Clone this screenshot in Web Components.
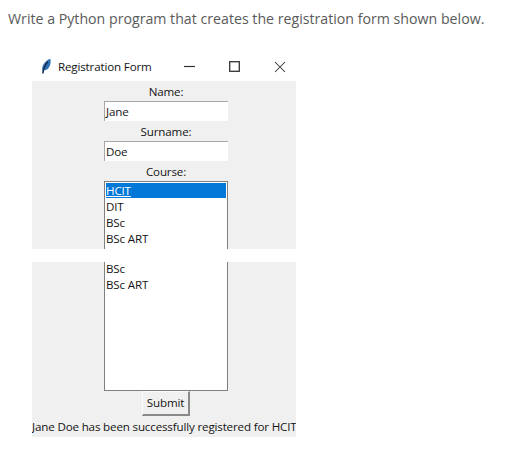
<!DOCTYPE html>
<html><head><meta charset="utf-8"><style>
html,body{margin:0;padding:0;background:#fff}
body{width:508px;height:453px;overflow:hidden;font-family:"Open Sans",sans-serif}
</style></head><body>
<reg-page>
  <span slot="prompt">Write a Python program that creates the registration form shown below.</span>
  <tk-window title="Registration Form">
    <tk-panel style="height:168px;padding-top:2px">
      <tk-label>Name:</tk-label>
      <tk-entry>Jane</tk-entry>
      <tk-label style="margin-top:2px">Surname:</tk-label>
      <tk-entry>Doe</tk-entry>
      <tk-label style="margin-top:2px">Course:</tk-label>
      <tk-list part-type="top" style="margin-top:1px">
        <tk-item selected>HCIT</tk-item><tk-item>DIT</tk-item><tk-item>BSc</tk-item><tk-item>BSc ART</tk-item>
      </tk-list>
    </tk-panel>
    <tk-gap></tk-gap>
    <tk-panel style="height:175px">
      <tk-list part-type="bottom" style="margin-top:-1px">
        <tk-item>BSc</tk-item><tk-item>BSc ART</tk-item>
      </tk-list>
      <tk-button>Submit</tk-button>
      <tk-label style="margin:2px 0 0 -4px;align-self:flex-start;white-space:nowrap">Jane Doe has been successfully registered for HCIT</tk-label>
    </tk-panel>
  </tk-window>
</reg-page>
<script>
const F="font:500 11.6px/17px 'Open Sans',sans-serif;letter-spacing:-.16px;color:#141414;";
function def(name, css, html, init){
  customElements.define(name, class extends HTMLElement{
    connectedCallback(){
      if(this.shadowRoot) return;
      const r=this.attachShadow({mode:"open"});
      r.innerHTML="<style>"+css+"</style>"+html;
      if(init) init(this,r);
    }
  });
}
def("reg-page",
  ":host{display:block}.p{padding:9px 0 0 8px;height:52px;box-sizing:border-box;font:14.18px/20px 'Open Sans',sans-serif;color:#5a5a5a;white-space:nowrap}.w{padding-left:32px}",
  "<div class='p'><slot name='prompt'></slot></div><div class='w'><slot></slot></div>");
def("tk-window",
  ":host{display:block;width:264px}.t{height:29px;display:flex;align-items:center;gap:21px;padding:0 4px 0 8px;"+F+"}.t svg{display:block;flex:none}.i{display:flex;flex:1;align-items:center;gap:5px;min-width:0}.n{white-space:nowrap;position:relative;top:-.5px}.b{display:flex;align-items:center;justify-content:center;width:24px;flex:none}.b svg{position:relative;left:-.5px}",
  `<div class='t'>
    <span class='i'><svg width='13' height='17' viewBox='0 0 13 17'><path d='M2.6 15.8L2.2 10.4C2.6 6.4 5.6 2.4 10.4 .8 11.2 4.8 10 9.6 7 11.6L4 12.6 3.4 15.8Z' fill='#2f6db5'/><path d='M2.9 15.2C3.2 11.4 4.8 7.2 7.8 3.8' stroke='#101c2c' stroke-width='1.1' fill='none'/></svg><span class='n'></span></span>
    <span class='b'><svg width='11' height='11' viewBox='0 0 11 11'><path d='M0 5.5H11' stroke='#333' stroke-width='1.2'/></svg></span>
    <span class='b'><svg width='11' height='11' viewBox='0 0 11 11'><rect x='.7' y='.7' width='9.6' height='9.6' fill='none' stroke='#333' stroke-width='1.3'/></svg></span>
    <span class='b'><svg width='12' height='12' viewBox='0 0 12 12'><path d='M1 1L11 11M11 1L1 11' stroke='#333' stroke-width='1.05'/></svg></span>
  </div><slot></slot>`,
  (h,r)=>{r.querySelector(".n").textContent=h.getAttribute("title")});
def("tk-panel",":host{display:flex;flex-direction:column;align-items:center;box-sizing:border-box;background:#f0f0f0;overflow:hidden;padding-left:4px}","<slot></slot>");
def("tk-gap",":host{display:block;height:13px;background:#fff}","");
def("tk-label",":host{display:block;"+F+"text-align:center}","<slot></slot>");
def("tk-entry",":host{display:block;width:124px;height:20px;box-sizing:border-box;background:#fff;border-top:1px solid #a8a8a8;border-left:1px solid #a8a8a8;padding-left:1px;"+F+"line-height:19px;margin-top:1px}","<slot></slot>");
def("tk-list",
  ":host{display:block;width:124px;flex:none;box-sizing:border-box;background:#fff;border:solid #808080;border-width:0 1.5px;"+F+"line-height:16px;padding:0 0 0 .5px}:host([part-type=top]){height:68px;border-top-width:1.5px;padding-top:.5px}:host([part-type=bottom]){height:130px;border-bottom-width:1.5px}",
  "<slot></slot>");
def("tk-item",":host{display:block;height:16px;padding-left:.5px;margin-right:1px}:host([selected]){background:#0078d7;color:#fff;text-decoration:underline;height:15px;margin-bottom:1px;line-height:16px}","<slot></slot>");
def("tk-button",":host{display:block;width:48px;height:25px;flex:none;box-sizing:border-box;background:#f0f0f0;border-right:2px solid #8a8a8a;border-bottom:2px solid #8a8a8a;border-top:1px solid #fafafa;border-left:1px solid #fafafa;text-align:center;"+F+"line-height:22px}","<slot></slot>");
</script></body></html>
